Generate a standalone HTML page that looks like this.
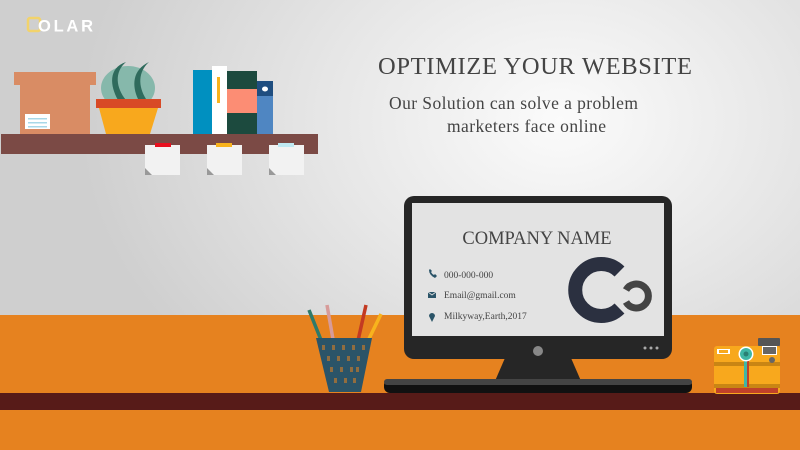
<!DOCTYPE html>
<html><head><meta charset="utf-8"><style>
html,body{margin:0;padding:0}
body{width:800px;height:450px;overflow:hidden;position:relative;font-family:"Liberation Serif",serif;
background:radial-gradient(ellipse 480px 360px at 560px 120px,#fbfbfb 0%,#e6e6e6 50%,#cfcfcf 100%);}
svg{position:absolute;left:0;top:0}
</style></head><body>
<svg width="800" height="450" viewBox="0 0 800 450">
<rect x="0" y="315" width="800" height="135" fill="#e6821f"/>
<rect x="0" y="393" width="800" height="17" fill="#571b18"/>
<!-- logo -->
<rect x="28" y="18" width="12" height="13" rx="2" fill="none" stroke="#f2d36b" stroke-width="2.5"/>
<text x="38" y="31.5" font-family="Liberation Sans, sans-serif" font-weight="bold" font-size="16.5" fill="#fff" textLength="55">OLAR</text>
<!-- box -->
<rect x="14" y="72" width="82" height="13" fill="#d98c64"/>
<rect x="20" y="85" width="70" height="49" fill="#d98c64"/>
<rect x="25" y="114" width="25" height="15" fill="#fff"/>
<rect x="28" y="118" width="19" height="1.5" fill="#a8d8e8"/><rect x="28" y="122" width="19" height="1.5" fill="#a8d8e8"/><rect x="28" y="126" width="19" height="1.5" fill="#a8d8e8"/>
<!-- plant -->
<ellipse cx="128" cy="88" rx="27" ry="22" fill="#86b8ab"/>
<path d="M126 62 C108 68 110 86 118 100 L126 100 C116 88 114 72 126 62Z" fill="#2f6b5d"/>
<path d="M149 62 C132 70 132 86 138 99 L146 99 C138 86 138 72 149 62Z" fill="#2f6b5d"/>
<rect x="96" y="99" width="65" height="9" fill="#d84a26"/>
<path d="M99 108 L158 108 L150 134 L106 134Z" fill="#f8a81d"/>
<!-- books -->
<rect x="193" y="70" width="19" height="64" fill="#0090c0"/>
<rect x="212" y="66" width="15" height="68" fill="#fff"/>
<rect x="217" y="77" width="3" height="26" fill="#f8b31d"/>
<rect x="227" y="71" width="30" height="63" fill="#1c4a3e"/>
<rect x="227" y="89" width="30" height="24" fill="#fc8d74"/>
<rect x="257" y="81" width="16" height="53" fill="#4f86c2"/>
<rect x="257" y="81" width="16" height="15" fill="#1f4e80"/>
<ellipse cx="265" cy="89" rx="3" ry="2.5" fill="#fff"/>
<!-- shelf -->
<rect x="1" y="134" width="317" height="20" fill="#7b4a45"/>
<g fill="#f2f2f2">
<rect x="145" y="145" width="35" height="30"/><rect x="207" y="145" width="35" height="30"/><rect x="269" y="145" width="35" height="30"/></g>
<rect x="155" y="143" width="16" height="4" fill="#e8101f"/>
<rect x="216" y="143" width="16" height="4" fill="#f8b31d"/>
<rect x="278" y="143" width="16" height="4" fill="#bfe9f2"/>
<path d="M145 168 L152 175 L145 175Z M207 168 L214 175 L207 175Z M269 168 L276 175 L269 175Z" fill="#999"/>
<!-- title -->
<text x="378" y="74" font-size="24.5" fill="#444" textLength="314">OPTIMIZE YOUR WEBSITE</text>
<text x="389" y="109" font-size="17.5" fill="#444" textLength="249">Our Solution can solve a problem</text>
<text x="447" y="132" font-size="17.5" fill="#444" textLength="159">marketers face online</text>
<!-- pencils -->
<g stroke-width="3.5" stroke-linecap="butt">
<line x1="309" y1="310" x2="323" y2="345" stroke="#2e7a6a"/>
<line x1="327" y1="305" x2="334" y2="345" stroke="#d79b99"/>
<line x1="366" y1="305" x2="357" y2="345" stroke="#c33a22"/>
<line x1="381" y1="314" x2="366" y2="345" stroke="#f8b31d"/>
</g>
<path d="M316 338 L372 338 L361 392 L329 392Z" fill="#2b5468"/>
<g fill="#e6821f" opacity=".55">
<rect x="322" y="345" width="3" height="5"/><rect x="332" y="345" width="3" height="5"/><rect x="342" y="345" width="3" height="5"/><rect x="352" y="345" width="3" height="5"/><rect x="362" y="345" width="3" height="5"/>
<rect x="327" y="356" width="3" height="5"/><rect x="337" y="356" width="3" height="5"/><rect x="347" y="356" width="3" height="5"/><rect x="357" y="356" width="3" height="5"/>
<rect x="330" y="367" width="3" height="5"/><rect x="340" y="367" width="3" height="5"/><rect x="350" y="367" width="3" height="5"/><rect x="356" y="367" width="3" height="5"/>
<rect x="334" y="378" width="3" height="5"/><rect x="344" y="378" width="3" height="5"/><rect x="353" y="378" width="3" height="5"/>
</g>
<!-- monitor -->
<path d="M505 358 L571 358 L581 381 L495 381Z" fill="#262626"/>
<rect x="404" y="196" width="268" height="163" rx="10" fill="#262626"/>
<rect x="412" y="203" width="252" height="133" fill="#e3e3e3"/>
<circle cx="538" cy="351" r="5" fill="#888"/>
<circle cx="645" cy="348" r="1.5" fill="#aaa"/><circle cx="651" cy="348" r="1.5" fill="#aaa"/><circle cx="657" cy="348" r="1.5" fill="#aaa"/>
<rect x="384" y="379" width="308" height="14" rx="6" fill="#111"/>
<rect x="384" y="379" width="308" height="6" rx="3" fill="#444"/>
<text x="537" y="244" font-size="18.5" fill="#444" text-anchor="middle">COMPANY NAME</text>
<g font-size="9.5" fill="#444"><text x="444" y="278">000-000-000</text><text x="444" y="298">Email@gmail.com</text><text x="444" y="319">Milkyway,Earth,2017</text></g>
<path d="M429 270 q0 5 6 8 l2 -2 l-2 -2 l-1 1 q-2 -1 -3 -3 l1 -1 l-2 -2z" fill="#2b5468"/>
<rect x="428" y="292" width="8" height="6" fill="#2b5468"/><path d="M428 292 l4 3 l4 -3" stroke="#e3e3e3" fill="none" stroke-width=".8"/>
<path d="M432 322 l-3 -6 a3 3 0 1 1 6 0z" fill="#2b5468"/>
<path d="M619.5 271.5 A26 26 0 1 0 619.5 308.5" fill="none" stroke="#2b3040" stroke-width="14"/>
<path d="M626 291 A12 12 0 1 1 626 303" fill="none" stroke="#444" stroke-width="7" transform="translate(0,-1)"/>
<!-- camera -->
<rect x="758" y="338" width="22" height="8" rx="1" fill="#555"/>
<rect x="714" y="346" width="66" height="48" rx="3" fill="#f8a81d"/>
<rect x="714" y="362" width="66" height="4" fill="#c98514"/>
<rect x="714" y="384" width="66" height="4" fill="#c98514"/>
<rect x="716" y="388" width="62" height="5" fill="#c0412a"/>
<rect x="744" y="360" width="3" height="27" fill="#3fb6a5"/><rect x="747" y="360" width="2" height="27" fill="#c0412a"/>
<rect x="717" y="349" width="13" height="5" fill="#fff"/><rect x="719" y="350" width="9" height="3" fill="#f8a81d"/>
<circle cx="746" cy="354" r="7.5" fill="#fff"/><circle cx="746" cy="354" r="6" fill="#3fb6a5"/><circle cx="746" cy="354" r="2.5" fill="#2a7f74"/>
<rect x="762" y="346" width="15" height="9" fill="#fff"/><rect x="763" y="347" width="13" height="7" fill="#666"/>
<circle cx="772" cy="360" r="3" fill="#666"/>
</svg>
</body></html>
